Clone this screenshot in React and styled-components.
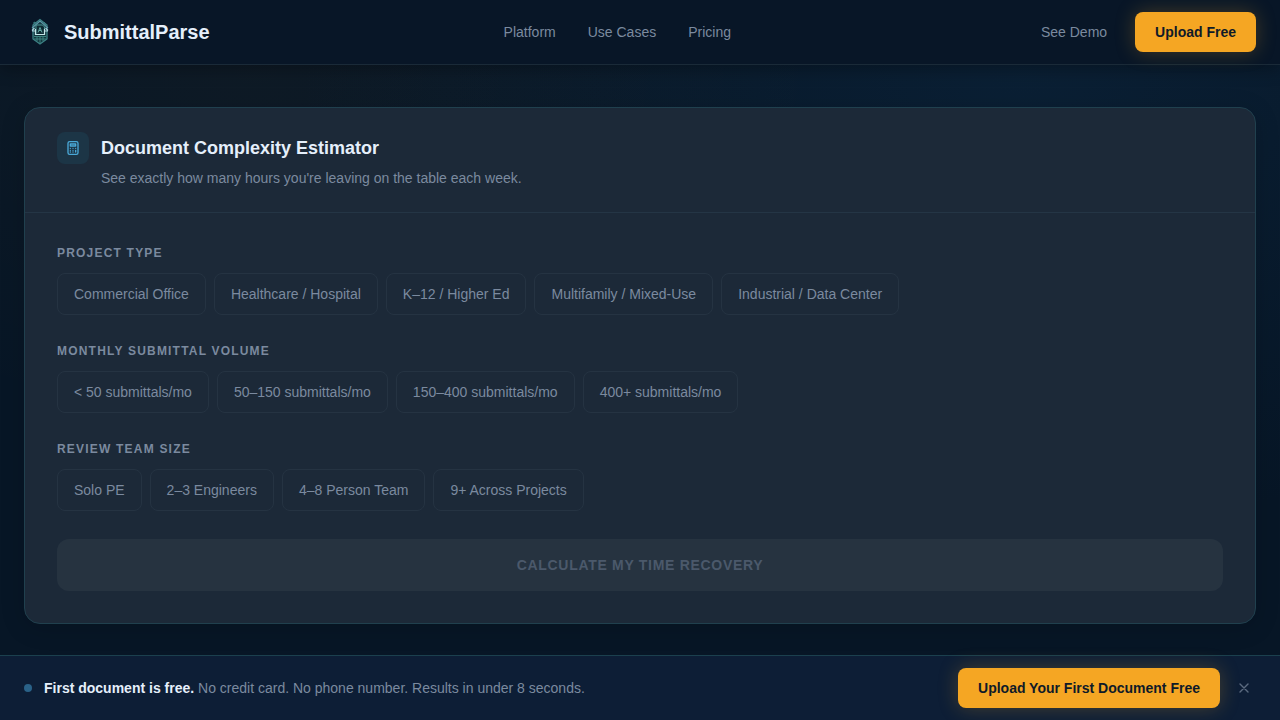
import React, { useState } from "react";
import styled, { createGlobalStyle } from "styled-components";

const GlobalStyle = createGlobalStyle`
  *, *::before, *::after { box-sizing: border-box; }
  html { background: #071626; }
  body {
    margin: 0;
    font-family: "Liberation Sans", Arial, sans-serif;
    font-size: 14px;
    line-height: 20px;
    color: #7b8a9f;
  }
  button { font: inherit; cursor: pointer; }
  a { color: inherit; text-decoration: none; }
`;

const Page = styled.div`
  display: flex;
  flex-direction: column;
  min-height: 100vh;
  background:
    radial-gradient(ellipse at 20% 10%, rgba(245, 166, 35, 0.03), transparent 40%),
    radial-gradient(ellipse at 80% 10%, rgba(20, 60, 95, 0.25), transparent 50%),
    #071626;
`;

const Header = styled.header`
  position: sticky;
  top: 0;
  z-index: 2;
  display: flex;
  align-items: center;
  justify-content: space-between;
  padding: 12px 24px;
  background: #081627;
  border-bottom: 1px solid #1a2a38;
  box-shadow: 0 4px 16px rgba(0, 0, 0, 0.3);
`;

const Brand = styled.a`
  display: flex;
  align-items: center;
  gap: 8px;
  color: #e5effb;
  font-size: 20px;
  font-weight: 700;
  line-height: 28px;
`;

const Nav = styled.nav`
  display: flex;
  gap: 32px;
`;

const Actions = styled.div`
  display: flex;
  align-items: center;
  gap: 12px;
`;

const DemoLink = styled.a`
  padding: 8px 16px;
`;

const UploadButton = styled.button`
  padding: 10px 20px;
  border: 0;
  border-radius: 8px;
  background: #f5a623;
  color: #0f1a28;
  font-weight: 700;
  white-space: nowrap;
  box-shadow: 0 0 20px rgba(245, 166, 35, 0.25);
`;

const Main = styled.main`
  flex: 1;
  padding: 42px 24px 24px;
`;

const Card = styled.section`
  border: 1px solid #20404e;
  border-radius: 16px;
  background: #1c2938;
  box-shadow: 0 4px 24px rgba(0, 0, 0, 0.15);
`;

const CardHeader = styled.div`
  display: grid;
  grid-template-columns: 32px 1fr;
  column-gap: 12px;
  row-gap: 4px;
  align-items: center;
  padding: 24px 32px;
  border-bottom: 1px solid #243545;
`;

const IconTile = styled.span`
  display: flex;
  align-items: center;
  justify-content: center;
  height: 32px;
  border-radius: 8px;
  background: #1c3546;
  color: #4aa9d8;
`;

const CardTitle = styled.h2`
  margin: 0;
  color: #e5effb;
  font-size: 18px;
  line-height: 28px;
`;

const CardSubtitle = styled.p`
  grid-column: 2;
  margin: 0;
`;

const Form = styled.form`
  display: flex;
  flex-direction: column;
  gap: 28px;
  padding: 32px;
`;

const Group = styled.fieldset`
  min-width: 0;
  margin: 0;
  padding: 0;
  border: 0;
`;

const GroupLabel = styled.legend`
  margin: 0 0 12px;
  padding: 0;
  color: #7b8a9f;
  font-size: 12px;
  font-weight: 700;
  line-height: 16px;
  letter-spacing: 0.1em;
  text-transform: uppercase;
`;

const Options = styled.div`
  display: flex;
  flex-wrap: wrap;
  gap: 8px;
`;

const Option = styled.button`
  padding: 10px 16px;
  border: 1px solid ${({ $active }) => ($active ? "#42a0cf" : "#253342")};
  border-radius: 8px;
  background: ${({ $active }) => ($active ? "#1d3648" : "transparent")};
  color: ${({ $active }) => ($active ? "#e5effb" : "#7b8a9f")};
`;

const CalculateButton = styled.button`
  padding: 16px;
  border: 0;
  border-radius: 12px;
  background: #263340;
  color: #4b596b;
  font-weight: 700;
  letter-spacing: 0.05em;
  text-transform: uppercase;

  &:enabled {
    background: #f5a623;
    color: #0f1a28;
  }
`;

const Banner = styled.aside`
  position: sticky;
  bottom: 0;
  z-index: 2;
  display: flex;
  align-items: center;
  justify-content: space-between;
  padding: 12px 24px;
  background: #0d1e36;
  border-top: 1px solid #1b404e;
`;

const Message = styled.p`
  display: flex;
  align-items: center;
  gap: 12px;
  margin: 0;

  strong { color: #e5effb; }
`;

const Dot = styled.span`
  flex: none;
  width: 8px;
  height: 8px;
  border-radius: 50%;
  background: #2a6288;
`;

const CloseButton = styled.button`
  display: flex;
  align-items: center;
  justify-content: center;
  width: 24px;
  height: 24px;
  padding: 0;
  border: 0;
  background: transparent;
  color: #5b6b80;
`;

const Logo = () => (
  <svg width="32" height="32" viewBox="0 0 32 32" fill="none" aria-hidden="true">
    <path d="M16 3.5 9 9v14l7 5 7-5V9Z" fill="#12373f" stroke="#3d8286" strokeWidth="1.3" />
    <path d="M10 8V6l2 1M20 6l2 3" stroke="#3d8286" />
    <path d="m8 12 8-7 8 7" stroke="#5e97a8" strokeWidth="1.2" />
    <path d="M8 14.5 10.5 12M24 14.5 21.5 12M8 15h3M21 15h3" stroke="#a9cfda" strokeWidth="1.2" />
    <path d="M12 9h6.5l2 2v7.500h-8.500Z" fill="#0f2c35" stroke="#4d9494" />
    <path d="M11.500 13v5.500h9V13" stroke="#c4e6e8" strokeWidth="1.2" />
    <path d="m14 16.500 2-5 2 5M15 14.500h2" stroke="#62aaa5" />
    <path d="M10 20.500h12M10 23h12M13 20v5M16 20v7M19 20v5" stroke="#3d827e" />
  </svg>
);

const CalculatorIcon = () => (
  <svg width="16" height="16" viewBox="0 0 24 24" fill="none" stroke="currentColor" strokeWidth="2" strokeLinecap="round" strokeLinejoin="round" aria-hidden="true">
    <rect x="4.5" y="2.500" width="15" height="19" rx="2.500" />
    <path d="M8 6h8v3H8ZM8 12.500h.01M12 12.500h.01M16 12.500h.01M8 15.500h.01M12 15.500h.01M16 15.500v2.500M8 18h.01M12 18h.01" />
  </svg>
);

const CloseIcon = () => (
  <svg width="16" height="16" viewBox="0 0 16 16" fill="none" stroke="currentColor" strokeWidth="1.4" strokeLinecap="round" aria-hidden="true">
    <path d="m4 4 8 8M12 4l-8 8" />
  </svg>
);

const groups = [
  {
    label: "Project Type",
    options: ["Commercial Office", "Healthcare / Hospital", "K–12 / Higher Ed", "Multifamily / Mixed-Use", "Industrial / Data Center"],
  },
  {
    label: "Monthly Submittal Volume",
    options: ["< 50 submittals/mo", "50–150 submittals/mo", "150–400 submittals/mo", "400+ submittals/mo"],
  },
  {
    label: "Review Team Size",
    options: ["Solo PE", "2–3 Engineers", "4–8 Person Team", "9+ Across Projects"],
  },
];

export default function App() {
  const [answers, setAnswers] = useState({});
  const [bannerOpen, setBannerOpen] = useState(true);
  const complete = groups.every(({ label }) => answers[label]);

  return (
    <>
      <GlobalStyle />
      <Page>
        <Header>
          <Brand href="#"><Logo />SubmittalParse</Brand>
          <Nav aria-label="Main">
            <a href="#platform">Platform</a>
            <a href="#use-cases">Use Cases</a>
            <a href="#pricing">Pricing</a>
          </Nav>
          <Actions>
            <DemoLink href="#demo">See Demo</DemoLink>
            <UploadButton type="button">Upload Free</UploadButton>
          </Actions>
        </Header>
        <Main>
          <Card>
            <CardHeader>
              <IconTile><CalculatorIcon /></IconTile>
              <CardTitle>Document Complexity Estimator</CardTitle>
              <CardSubtitle>See exactly how many hours you're leaving on the table each week.</CardSubtitle>
            </CardHeader>
            <Form onSubmit={(event) => event.preventDefault()}>
              {groups.map(({ label, options }) => (
                <Group key={label}>
                  <GroupLabel>{label}</GroupLabel>
                  <Options>
                    {options.map((option) => (
                      <Option
                        key={option}
                        type="button"
                        $active={answers[label] === option}
                        aria-pressed={answers[label] === option}
                        onClick={() => setAnswers({ ...answers, [label]: option })}
                      >
                        {option}
                      </Option>
                    ))}
                  </Options>
                </Group>
              ))}
              <CalculateButton type="submit" disabled={!complete}>Calculate My Time Recovery</CalculateButton>
            </Form>
          </Card>
        </Main>
        {bannerOpen && (
          <Banner>
            <Message>
              <Dot />
              <span><strong>First document is free.</strong> No credit card. No phone number. Results in under 8 seconds.</span>
            </Message>
            <Actions>
              <UploadButton type="button">Upload Your First Document Free</UploadButton>
              <CloseButton type="button" aria-label="Dismiss" onClick={() => setBannerOpen(false)}><CloseIcon /></CloseButton>
            </Actions>
          </Banner>
        )}
      </Page>
    </>
  );
}
